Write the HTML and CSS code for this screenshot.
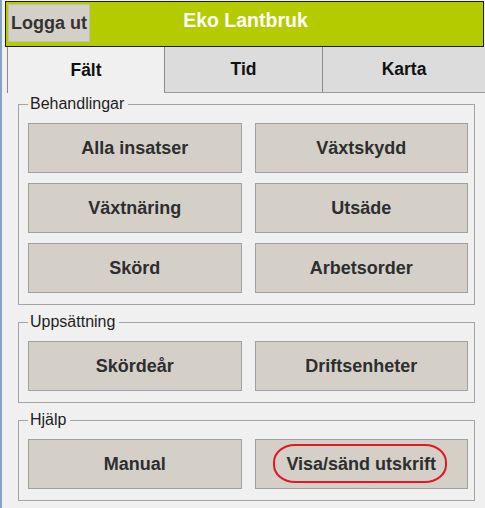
FILE: index.html
```html
<!DOCTYPE html>
<html lang="sv">
<head>
<meta charset="utf-8">
<title>Eko Lantbruk</title>
<link rel="stylesheet" href="styles.css">
</head>
<body>
<div class="app">
  <header class="topbar">
    <button class="logout" type="button">Logga ut</button>
    <h1 class="title">Eko Lantbruk</h1>
    <span></span>
  </header>
  <nav class="tabs">
    <div class="tab active">Fält</div>
    <div class="tab">Tid</div>
    <div class="tab">Karta</div>
  </nav>
  <main class="panel">
    <fieldset class="group">
      <legend>Behandlingar</legend>
      <div class="grid">
        <button class="btn" type="button">Alla insatser</button>
        <button class="btn" type="button">Växtskydd</button>
        <button class="btn" type="button">Växtnäring</button>
        <button class="btn" type="button">Utsäde</button>
        <button class="btn" type="button">Skörd</button>
        <button class="btn" type="button">Arbetsorder</button>
      </div>
    </fieldset>
    <fieldset class="group">
      <legend>Uppsättning</legend>
      <div class="grid">
        <button class="btn" type="button">Skördeår</button>
        <button class="btn" type="button">Driftsenheter</button>
      </div>
    </fieldset>
    <fieldset class="group">
      <legend>Hjälp</legend>
      <div class="grid">
        <button class="btn" type="button">Manual</button>
        <button class="btn marked" type="button"><span class="mark"></span>Visa/sänd utskrift</button>
      </div>
    </fieldset>
  </main>
</div>
</body>
</html>
```

FILE: styles.css
```css
html, body {
  margin: 0;
  padding: 0;
  background: #f0f0f0;
}
body {
  width: 485px;
  height: 508px;
  overflow: hidden;
  font-family: "Liberation Sans", Arial, sans-serif;
}
.app {
  box-sizing: border-box;
  height: 508px;
  border-left: 2px solid #86a3c4;
  display: flex;
  flex-direction: column;
}
.topbar {
  margin: 1px 1px 0 3px;
  border: 1px solid #1c1c1c;
  background: #b4cb00;
  display: grid;
  grid-template-columns: 1fr auto 1fr;
  align-items: start;
  padding: 2px 0 0 2px;
  height: 42px;
}
.logout {
  justify-self: start;
  width: 82px;
  height: 38px;
  margin: 0;
  padding: 0;
  background: #d4d0c8;
  border: 1px solid #c4c0b8;
  color: #333;
  font: bold 18px "Liberation Sans", Arial, sans-serif;
}
.title {
  margin: 5px 0 0 0;
  font: bold 19.5px/22px "Liberation Sans", Arial, sans-serif;
  color: #fff;
}
.tabs {
  margin-left: 5px;
  display: grid;
  grid-template-columns: 157px 158px 1fr;
  height: 46px;
}
.tab {
  display: flex;
  align-items: center;
  justify-content: center;
  font-weight: bold;
  font-size: 17.5px;
  color: #111;
  background: #dcdcdc;
  border-left: 1px solid #8a8a8a;
  border-bottom: 1px solid #9a9a9a;
}
.tab.active {
  background: #f0f0f0;
  border-bottom: none;
}
.panel {
  padding: 1px 10px 0 16px;
  display: flex;
  flex-direction: column;
  gap: 7px;
}
.group {
  margin: 0;
  border: 1px solid #a4a4a4;
  padding: 9px 6px 11px 9px;
}
.group legend {
  margin-left: 0;
  padding: 0 4px 0 2px;
  font-size: 16px;
  line-height: 20px;
  color: #1e1e1e;
}
.grid {
  display: grid;
  grid-template-columns: 1fr 1fr;
  column-gap: 13px;
  row-gap: 10px;
}
.btn {
  height: 50px;
  margin: 0;
  padding: 0;
  background: #d4d0c8;
  border: 1px solid #a0a0a0;
  color: #2e2e2e;
  font: bold 18px "Liberation Sans", Arial, sans-serif;
}
.marked {
  position: relative;
}
.mark {
  position: absolute;
  left: 17px;
  top: 4px;
  width: 170px;
  height: 35px;
  border: 2px solid #e01820;
  border-radius: 22px / 18px;
}
```
